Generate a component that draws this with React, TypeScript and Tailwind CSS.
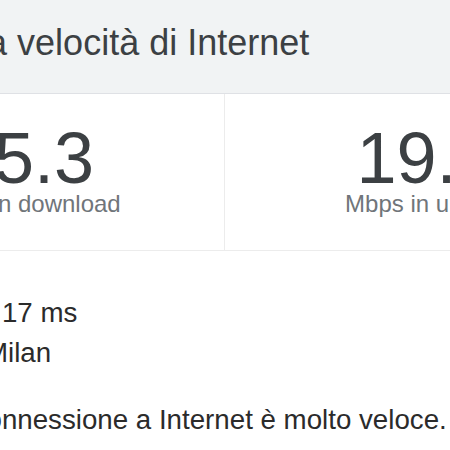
export default function App() {
  return (
    <div className="h-[450px] w-[450px] overflow-hidden bg-white font-['Liberation_Sans',Arial,sans-serif]">
      <div className="ml-[-176px] w-[800px]">
        {/* Header */}
        <div className="h-[94px] border-b border-[#dfe1e5] bg-[#f1f3f4] pl-[31px] pt-[23px]">
          <h2 className="text-[36px] leading-[40px] font-normal text-[#3c4043]">
            Test della velocità di Internet
          </h2>
        </div>

        {/* Stats */}
        <div className="grid grid-cols-2 border-b border-[#ececec]">
          <div className="flex flex-col items-center pt-[32px] pb-[32px]">
            <span className="text-[72px] leading-[64px] text-[#3c4043]">45.3</span>
            <span className="text-[24px] leading-[28px] text-[#70757a]">Mbps in download</span>
          </div>
          <div className="flex flex-col items-center border-l border-[#ececec] pt-[32px] pb-[32px] pl-[4px]">
            <span className="text-[72px] leading-[64px] text-[#3c4043]">19.8</span>
            <span className="text-[24px] leading-[28px] text-[#70757a]">Mbps in upload</span>
          </div>
        </div>

        {/* Details */}
        <div className="pl-[64px] pt-[42px] text-[27.7px] leading-[40px] text-[#2b2b2b]">
          <p>Latenza: 17 ms</p>
          <p>Server: Milan</p>
          <p className="mt-[27px]">La tua connessione a Internet è molto veloce.</p>
        </div>
      </div>
    </div>
  );
}
